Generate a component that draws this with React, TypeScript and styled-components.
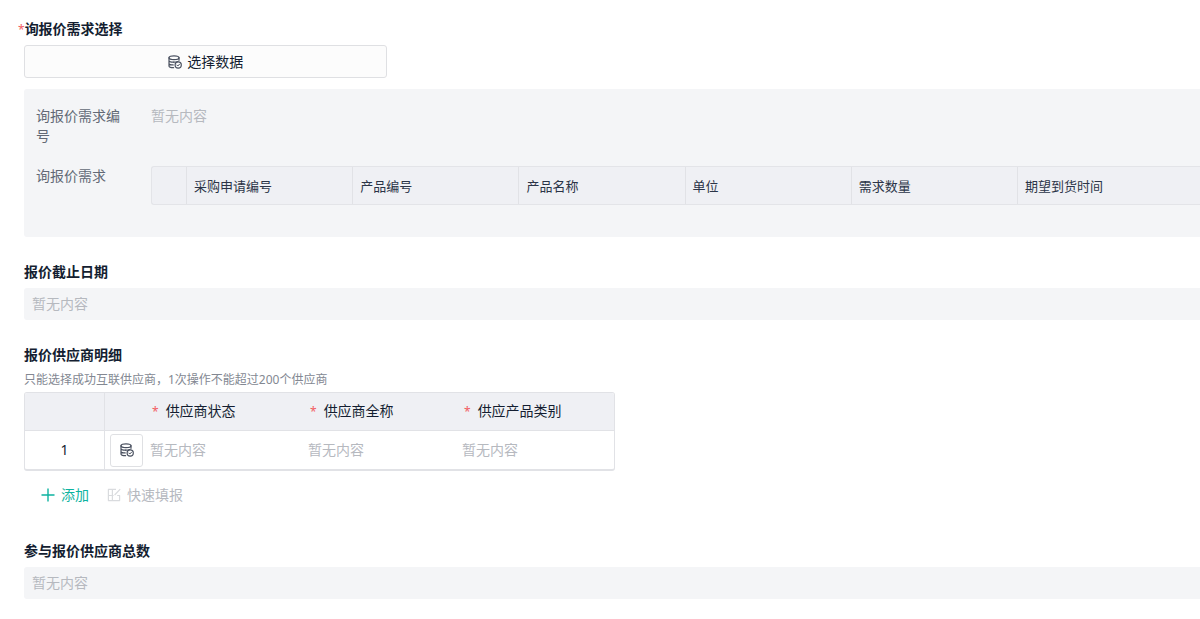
import React from "react";
import styled, { createGlobalStyle } from "styled-components";

const GlobalStyle = createGlobalStyle`
  *, *::before, *::after { box-sizing: border-box; }
  body {
    margin: 0;
    background: #fff;
    color: #141e31;
    font-family: "Noto Sans", "Noto Sans CJK SC", sans-serif;
    font-size: 14px;
    line-height: 20px;
  }
  button { font: inherit; color: inherit; cursor: pointer; }
`;

const Form = styled.main`
  display: flex;
  flex-direction: column;
  gap: 25px;
  padding: 19px 0 19px 24px;
  overflow: hidden;
`;

const Field = styled.section`
  display: flex;
  flex-direction: column;
`;

const Title = styled.h2<{ $required?: boolean }>`
  margin: 0 0 ${(p) => (p.$required ? 5 : 6)}px ${(p) => (p.$required ? -6 : 0)}px;
  font-size: 14px;
  line-height: 20px;
  font-weight: 700;
`;

const Star = styled.span`
  color: #f25c62;
  font-size: 12px;
  font-weight: 400;
`;

const Hint = styled.p`
  margin: 0 0 3px;
  color: #838892;
  font-size: 12px;
  line-height: 18px;
`;

const SelectButton = styled.button`
  display: flex;
  align-items: center;
  justify-content: center;
  gap: 5px;
  width: 30.9%;
  min-width: 200px;
  height: 33px;
  margin-bottom: 11px;
  padding: 0;
  background: #fcfcfc;
  border: 1px solid #dfe0e3;
  border-radius: 3px;
`;

const Panel = styled.div`
  display: grid;
  grid-template-columns: 91px minmax(0, 1fr);
  column-gap: 24px;
  row-gap: 20px;
  padding: 17px 0 32px 12px;
  background: #f4f5f7;
  border-radius: 3px 0 0 3px;
`;

const PanelLabel = styled.div`
  color: #626975;
`;

const Empty = styled.span`
  color: #b6b9bf;
`;

const EmptyBox = styled.div`
  height: 32px;
  padding: 6px 8px;
  background: #f4f5f7;
  border-radius: 3px 0 0 3px;
  color: #b6b9bf;
`;

const DemandTable = styled.table`
  width: 100%;
  table-layout: fixed;
  border-collapse: separate;
  border-spacing: 0;
  border: 1px solid #e3e4e8;
  border-right: 0;
  border-radius: 3px 0 0 3px;
  background: #eff0f4;
  font-size: 13px;
`;

const DemandHead = styled.th<{ $index?: boolean }>`
  width: ${(p) => (p.$index ? "35px" : "15.86%")};
  height: 37px;
  padding: 0 7px;
  border-right: 1px solid #e1e2e6;
  color: #2b3447;
  text-align: left;
  font-weight: 400;

  &:last-child {
    width: auto;
    border-right: 0;
  }
`;

const SupplierTable = styled.table`
  width: 591px;
  max-width: 100%;
  table-layout: fixed;
  border-collapse: separate;
  border-spacing: 0;
  border: 1px solid #e1e2e6;
  border-bottom-width: 2px;
  border-radius: 3px;
  overflow: hidden;
`;

const SupplierHead = styled.th<{ $width?: number; $divider?: boolean }>`
  width: ${(p) => (p.$width ? `${p.$width}px` : "auto")};
  height: 38px;
  padding: 0 7px;
  background: #eff0f4;
  border-bottom: 1px solid #e1e2e6;
  border-right: ${(p) => (p.$divider ? "1px solid #e1e2e6" : "0")};
  text-align: left;
  font-weight: 400;

  ${Star} {
    margin-right: 7px;
  }
`;

const SupplierCell = styled.td<{ $divider?: boolean }>`
  height: 38px;
  padding: 0 5px;
  border-right: ${(p) => (p.$divider ? "1px solid #e1e2e6" : "0")};
  text-align: ${(p) => (p.$divider ? "center" : "left")};
`;

const PickButton = styled.button`
  display: flex;
  align-items: center;
  justify-content: center;
  width: 33px;
  height: 33px;
  padding: 0;
  background: #fff;
  border: 1px solid #dfe0e3;
  border-radius: 3px;
`;

const Actions = styled.div`
  display: flex;
  gap: 18px;
  padding: 14px 0 11px 17px;
`;

const ActionButton = styled.button<{ $primary?: boolean }>`
  display: flex;
  align-items: center;
  gap: 6px;
  padding: 0;
  background: none;
  border: 0;
  line-height: 20px;
  color: ${(p) => (p.$primary ? "#0db3a0" : "#b6b9bf")};
`;

const DataIcon = () => (
  <svg width="14" height="14" viewBox="0 0 14 14" fill="none" stroke="#4a5160" strokeWidth="1.2" strokeLinecap="round" aria-hidden="true">
    <ellipse cx="6" cy="2.7" rx="5" ry="1.9" />
    <path d="M1 2.7v8.2c0 1 1.8 1.7 4.6 1.8M11 2.7v2.6M1 5.5c0 1 2 1.7 4.7 1.7M1 8.2c0 1 1.8 1.7 4.2 1.7" />
    <path d="M5.7 7.2c1.6 0 3.1-.2 4.2-.7" />
    <circle cx="10.2" cy="10" r="3.1" />
    <path d="M8.8 10l1 1 1.8-1.9" strokeWidth="1" />
  </svg>
);

const PlusIcon = () => (
  <svg width="14" height="14" viewBox="0 0 14 14" fill="none" stroke="currentColor" strokeWidth="1.4" aria-hidden="true">
    <path d="M7 .5v13M.5 7h13" />
  </svg>
);

const FillIcon = () => (
  <svg width="14" height="14" viewBox="0 0 14 14" fill="none" stroke="#d9dbde" strokeWidth="1.2" strokeLinejoin="round" aria-hidden="true">
    <path d="M9 1.4H1.4v11.2h11.2V7.5h-2.4M1.4 7.5h5.2M5.4 1.4v11.2" />
    <path d="M13.2 1.2L7.6 7" />
  </svg>
);

const demandColumns = ["采购申请编号", "产品编号", "产品名称", "单位", "需求数量", "期望到货时间"];
const supplierColumns = [
  { name: "供应商状态", width: 158 },
  { name: "供应商全称", width: 154 },
  { name: "供应产品类别" },
];

export default function App() {
  return (
    <>
      <GlobalStyle />
      <Form>
        <Field>
          <Title $required>
            <Star>*</Star>询报价需求选择
          </Title>
          <SelectButton type="button">
            <DataIcon />
            选择数据
          </SelectButton>
          <Panel>
            <PanelLabel>询报价需求编号</PanelLabel>
            <Empty>暂无内容</Empty>
            <PanelLabel>询报价需求</PanelLabel>
            <DemandTable aria-label="询报价需求">
              <thead>
                <tr>
                  <DemandHead $index />
                  {demandColumns.map((name) => (
                    <DemandHead key={name} scope="col">{name}</DemandHead>
                  ))}
                </tr>
              </thead>
            </DemandTable>
          </Panel>
        </Field>

        <Field>
          <Title>报价截止日期</Title>
          <EmptyBox>暂无内容</EmptyBox>
        </Field>

        <Field>
          <Title>报价供应商明细</Title>
          <Hint>只能选择成功互联供应商，1次操作不能超过200个供应商</Hint>
          <SupplierTable aria-label="报价供应商明细">
            <thead>
              <tr>
                <SupplierHead $width={80} $divider />
                <SupplierHead $width={40} />
                {supplierColumns.map((col) => (
                  <SupplierHead key={col.name} $width={col.width} scope="col">
                    <Star>*</Star>
                    {col.name}
                  </SupplierHead>
                ))}
              </tr>
            </thead>
            <tbody>
              <tr>
                <SupplierCell $divider>1</SupplierCell>
                <SupplierCell>
                  <PickButton type="button" aria-label="选择数据">
                    <DataIcon />
                  </PickButton>
                </SupplierCell>
                {supplierColumns.map((col) => (
                  <SupplierCell key={col.name}>
                    <Empty>暂无内容</Empty>
                  </SupplierCell>
                ))}
              </tr>
            </tbody>
          </SupplierTable>
          <Actions>
            <ActionButton type="button" $primary>
              <PlusIcon />
              添加
            </ActionButton>
            <ActionButton type="button" disabled>
              <FillIcon />
              快速填报
            </ActionButton>
          </Actions>
        </Field>

        <Field>
          <Title>参与报价供应商总数</Title>
          <EmptyBox>暂无内容</EmptyBox>
        </Field>
      </Form>
    </>
  );
}
